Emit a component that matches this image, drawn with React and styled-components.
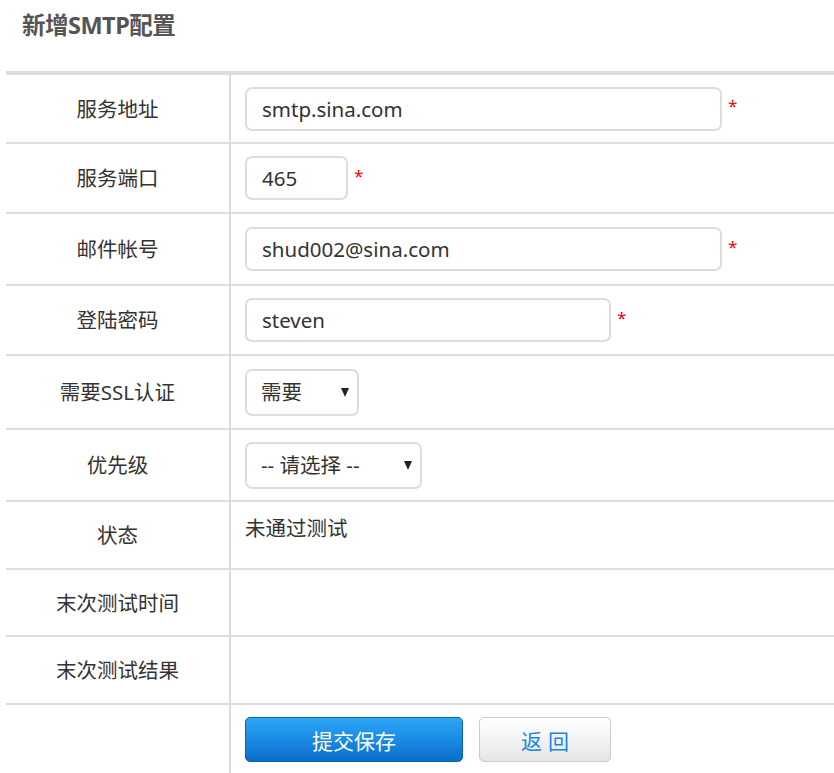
import React from 'react';
import styled, { createGlobalStyle } from 'styled-components';

const GlobalStyle = createGlobalStyle`
  body {
    margin: 0;
    background: #fff;
    font-family: "Noto Sans", "Noto Sans CJK SC", sans-serif;
    color: #333;
  }
`;

const Page = styled.div`
  width: 834px;
  height: 773px;
  overflow: hidden;
  padding-left: 6px;
  box-sizing: border-box;
`;

const Title = styled.h2`
  margin: 0;
  height: 71px;
  padding: 7px 0 0 16px;
  box-sizing: border-box;
  font-size: 23.5px;
  font-weight: bold;
  color: #555;
  letter-spacing: -0.5px;
`;

const Table = styled.table`
  width: 834px;
  border-collapse: collapse;
  border-top: 4px solid #ddd;
`;

const Row = styled.tr`
  border-bottom: 2px solid #ddd;
  height: ${(p) => p.h}px;
`;

const Label = styled.td`
  width: 223px;
  border-right: 2px solid #ddd;
  text-align: center;
  vertical-align: middle;
  font-size: 20.5px;
  color: #333;
  padding: 0 0 2px;
`;

const Value = styled.td`
  padding: 0 0 0 14px;
  vertical-align: ${(p) => (p.top ? 'top' : 'middle')};
  font-size: 20.5px;
  color: #333;
`;

const Field = styled.div`
  display: flex;
  align-items: center;
`;

const Input = styled.input`
  width: ${(p) => p.w}px;
  height: 44px;
  box-sizing: border-box;
  border: 2px solid #ddd;
  border-radius: 7px;
  padding: 0 15px;
  font-family: "Noto Sans", "Noto Sans CJK SC", sans-serif;
  font-size: 20.5px;
  color: #333;
  outline: none;
`;

const Star = styled.span`
  color: #f00;
  font-size: 17px;
  margin-left: 6px;
  margin-top: -6px;
`;

const SelectBox = styled.div`
  position: relative;
  width: ${(p) => p.w}px;
  height: 47px;
`;

const Select = styled.select`
  appearance: none;
  width: 100%;
  height: 100%;
  box-sizing: border-box;
  border: 2px solid #ddd;
  border-radius: 7px;
  padding: 0 14px;
  background: #fff;
  font-family: "Noto Sans", "Noto Sans CJK SC", sans-serif;
  font-size: 20.5px;
  color: #333;
  outline: none;
`;

const Arrow = styled.span`
  position: absolute;
  right: 10px;
  top: 19px;
  width: 0;
  height: 0;
  border-left: 4.5px solid transparent;
  border-right: 4.5px solid transparent;
  border-top: 9px solid #222;
  pointer-events: none;
`;

const StatusText = styled.div`
  padding-top: 10px;
`;

const Buttons = styled.div`
  display: flex;
  gap: 16px;
  padding-top: 12px;
  height: 70px;
  box-sizing: border-box;
`;

const Button = styled.button`
  width: ${(p) => p.w}px;
  height: 45px;
  border-radius: 5px;
  font-family: "Noto Sans CJK SC", "Noto Sans", sans-serif;
  font-size: 21px;
  cursor: pointer;
  ${(p) =>
    p.primary
      ? `
    color: #fff;
    border: 1px solid #0b64b0;
    background: linear-gradient(to bottom, #2ca6f7 0%, #1a8be4 50%, #0a6dc6 100%);
  `
      : `
    color: #1a86e0;
    letter-spacing: 6px;
    padding-left: 12px;
    border: 1px solid #ccc;
    background: linear-gradient(to bottom, #ffffff 0%, #f3f3f3 50%, #e4e4e4 100%);
  `}
`;

function SelectField({ w, value, options }) {
  return (
    <SelectBox w={w}>
      <Select defaultValue={value}>
        {options.map((o) => (
          <option key={o}>{o}</option>
        ))}
      </Select>
      <Arrow />
    </SelectBox>
  );
}

export default function App() {
  return (
    <Page>
      <GlobalStyle />
      <Title>新增SMTP配置</Title>
      <Table>
        <tbody>
          <Row h={70}>
            <Label>服务地址</Label>
            <Value>
              <Field>
                <Input w={477} defaultValue="smtp.sina.com" />
                <Star>*</Star>
              </Field>
            </Value>
          </Row>
          <Row h={70}>
            <Label>服务端口</Label>
            <Value>
              <Field>
                <Input w={103} defaultValue="465" />
                <Star>*</Star>
              </Field>
            </Value>
          </Row>
          <Row h={72}>
            <Label>邮件帐号</Label>
            <Value>
              <Field>
                <Input w={477} defaultValue="shud002@sina.com" />
                <Star>*</Star>
              </Field>
            </Value>
          </Row>
          <Row h={70}>
            <Label>登陆密码</Label>
            <Value>
              <Field>
                <Input w={366} defaultValue="steven" />
                <Star>*</Star>
              </Field>
            </Value>
          </Row>
          <Row h={74}>
            <Label>需要SSL认证</Label>
            <Value>
              <SelectField w={114} value="需要" options={['需要', '不需要']} />
            </Value>
          </Row>
          <Row h={72}>
            <Label>优先级</Label>
            <Value>
              <SelectField w={177} value="-- 请选择 --" options={['-- 请选择 --', '高', '中', '低']} />
            </Value>
          </Row>
          <Row h={68}>
            <Label>状态</Label>
            <Value top>
              <StatusText>未通过测试</StatusText>
            </Value>
          </Row>
          <Row h={67}>
            <Label>末次测试时间</Label>
            <Value />
          </Row>
          <Row h={68}>
            <Label>末次测试结果</Label>
            <Value />
          </Row>
          <Row h={70}>
            <Label />
            <Value top>
              <Buttons>
                <Button primary w={218}>提交保存</Button>
                <Button w={132}>返回</Button>
              </Buttons>
            </Value>
          </Row>
        </tbody>
      </Table>
    </Page>
  );
}
